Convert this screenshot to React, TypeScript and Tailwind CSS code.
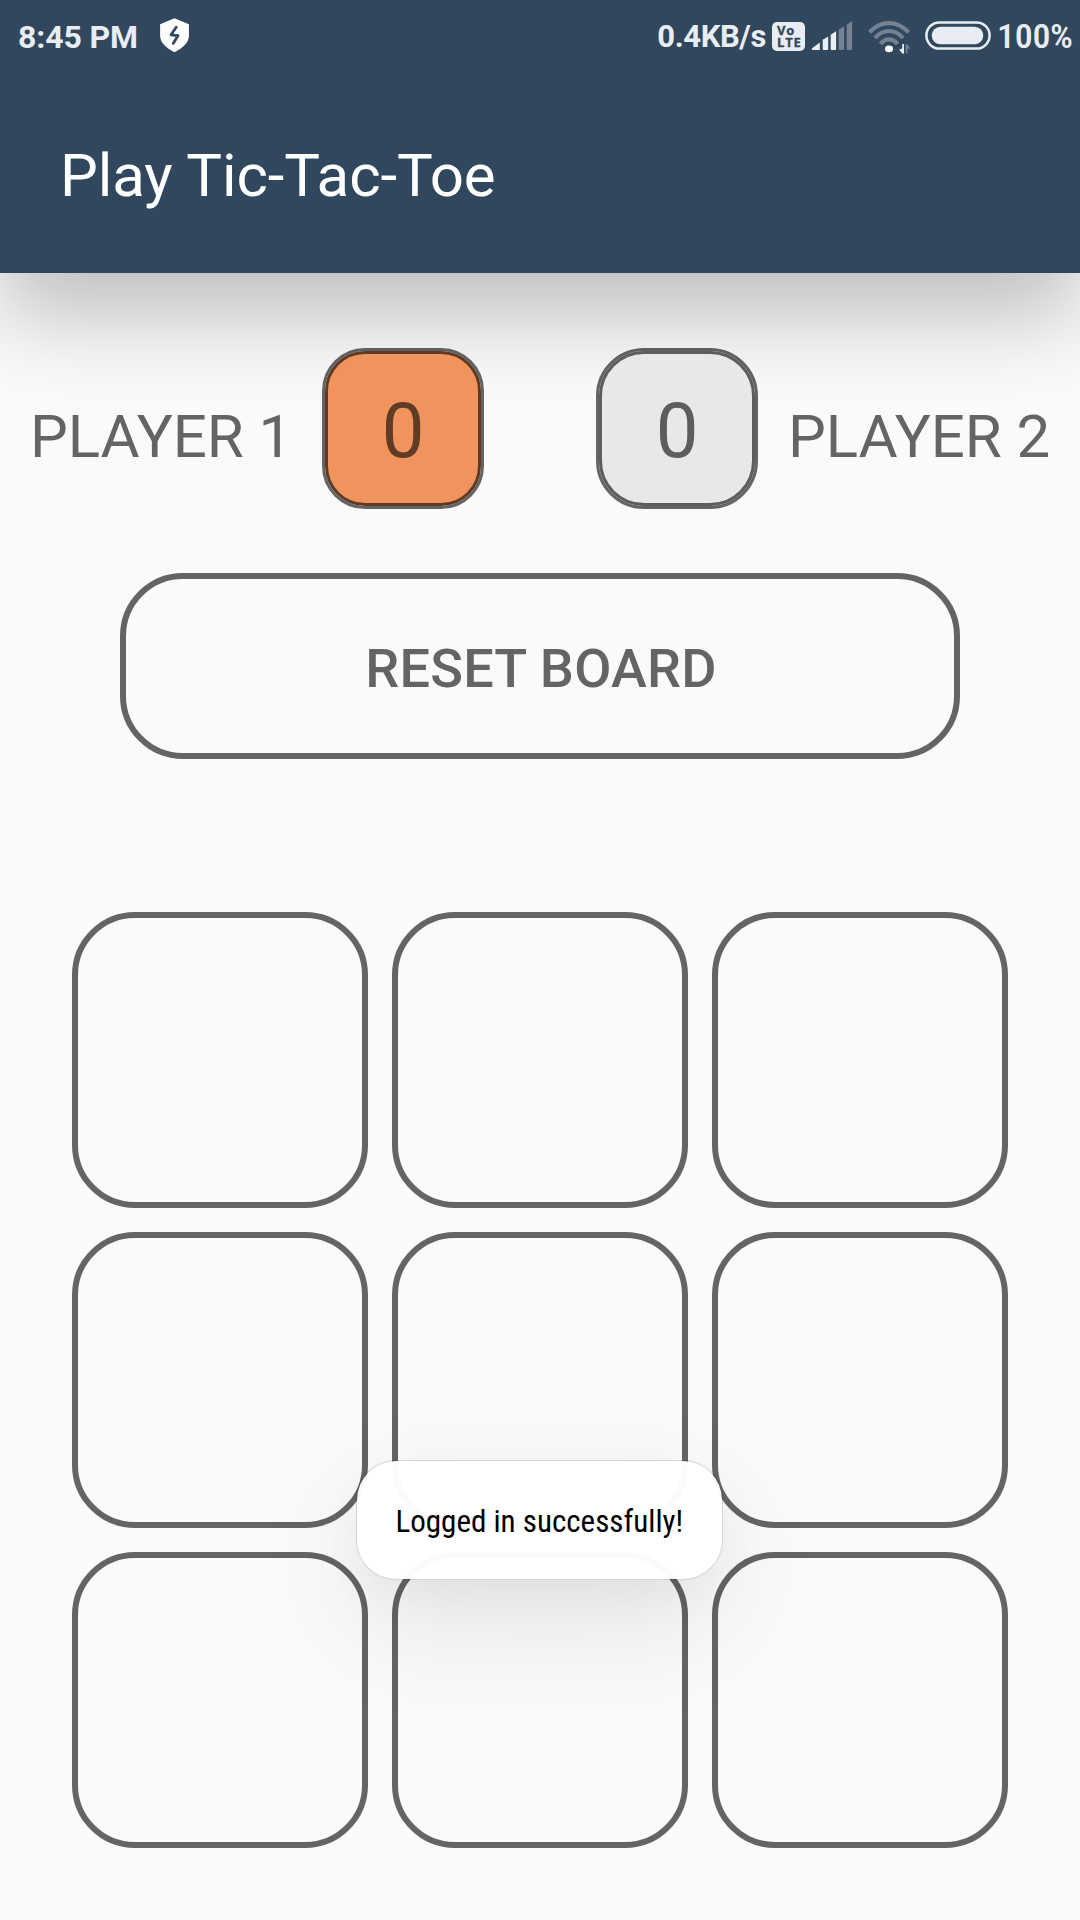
const BATTERY_LEVEL = "100%";

function ShieldIcon() {
  return (
    <svg className="mb-[2px] ml-[22px] h-[36px] w-[31px]" viewBox="0 0 31 36" fill="none">
      <path d="M15.5 1.3 29.9 7.2V18.6C29.9 25.6 24.2 31 15.5 35.3 6.8 31 1.1 25.6 1.1 18.6V7.2Z" fill="#fff" />
      <path d="M17.2 10.2 12 17.8 19 18.6 14.2 26.4" stroke="#31475d" strokeWidth="2.8" strokeLinecap="round" strokeLinejoin="round" />
    </svg>
  );
}

function VolteBadge() {
  return (
    <svg className="ml-[6px] h-[29px] w-[33px]" viewBox="0 0 33 29">
      <rect width="33" height="29" rx="5" fill="#e9edf1" />
      <text fill="#31475d" stroke="#31475d" strokeWidth="0.3" fontFamily="Open Sans, sans-serif" fontWeight="700" fontSize="13" letterSpacing="0.8">
        <tspan x="5" y="12.6">Vo</tspan>
        <tspan x="5" y="25.4">LTE</tspan>
      </text>
    </svg>
  );
}

function SignalIcon() {
  return (
    <svg className="ml-[6px] h-[30px] w-[42px]" viewBox="0 0 42 30">
      <g fill="#eceff2">
        <path d="M.8 27.4 8.8 21.5V29H1.6Q.4 29 .8 27.4Z" />
        <path d="M11.7 18.8 17.2 15.4V28Q17.2 29 16.2 29H12.7Q11.7 29 11.7 28Z" />
        <path d="M19.7 13.7 25.1 10.3V28Q25.1 29 24.1 29H20.7Q19.7 29 19.7 28Z" />
      </g>
      <g fill="#748293">
        <path d="M27.7 8.8 33.1 5.2V28Q33.1 29 32.1 29H28.7Q27.7 29 27.7 28Z" />
        <path d="M35.7 3.8 41.1 0V28Q41.1 29 40.1 29H36.7Q35.7 29 35.7 28Z" />
      </g>
    </svg>
  );
}

function WifiIcon() {
  return (
    <svg className="ml-[14px] mt-[2px] h-[34px] w-[44px]" viewBox="0 0 44 34" fill="none">
      <g stroke="#748293" strokeWidth="4.2">
        <path d="M2.5 12.2Q11 3.1 22 3.1T41.5 12.2" />
        <path d="M8 18Q14 11 22 11T36 18" />
        <path d="M13.5 24Q17 19.3 22 19.3T30.5 24" />
      </g>
      <ellipse cx="22" cy="28.9" rx="4" ry="3.3" fill="#fff" />
      <path d="M37 24V33.5H35.2L32.2 29.4 35.2 28.6V24Z" fill="#eceff2" />
      <path d="M38.7 24H40L43.2 28.600 40.400 28.800V33.500H38.700Z" fill="#748293" />
    </svg>
  );
}

function BatteryIcon() {
  return (
    <svg className="mb-[2px] ml-[14px] h-[29px] w-[66px]" viewBox="0 0 66 29" fill="none">
      <rect x="1.4" y="1.4" width="63.2" height="26.2" rx="13.1" stroke="#e9edf1" strokeWidth="2.5" />
      <rect x="6.7" y="5.7" width="51.6" height="17.6" rx="8.8" fill="#e9ecf2" />
    </svg>
  );
}

function StatusBar() {
  return (
    <div className="flex h-[72px] items-center justify-between pl-[18px] pr-[9px] text-[#e9edf1]">
      <div className="flex items-center">
        <span className="w-[119px] whitespace-nowrap pt-[1px] text-[32px] font-bold leading-none tracking-[-0.1px]">8:45 PM</span>
        <ShieldIcon />
      </div>
      <div className="flex items-center">
        <span className="pt-[1px] text-[31px] font-bold leading-none tracking-[-0.4px]">0.4KB/s</span>
        <VolteBadge />
        <SignalIcon />
        <WifiIcon />
        <BatteryIcon />
        <span className="ml-[6px] w-[74px] origin-left scale-x-[1.06] text-[34px] font-medium leading-none tracking-[-0.3px] [font-stretch:75%]">{BATTERY_LEVEL}</span>
      </div>
    </div>
  );
}

function Score({ value, active }: { value: number; active?: boolean }) {
  return (
    <div className={`h-[161px] w-[162px] shrink-0 border-[3px] border-black/60 ${active ? "rounded-[43px]" : "rounded-[48px]"}`}>
      <div
        className={`flex h-full items-center justify-center border-[3px] text-[76px] leading-none ${
          active
            ? "rounded-[40px] border-[#5e3a25] bg-[#f1935c] text-[#603b25]"
            : "rounded-[45px] border-[#5d5d5d] bg-[#e8e8e8] text-[#5d5d5d]"
        }`}
      >
        <span className="pt-[5px]">{value}</span>
      </div>
    </div>
  );
}

function Toast() {
  return (
    <div className="absolute left-[356px] top-[1460px] flex h-[120px] w-[367px] items-center justify-center rounded-[40px] border border-black/15 bg-white/97 bg-clip-padding shadow-[0_44px_120px_rgba(0,0,0,0.09),0_20px_50px_-10px_rgba(0,0,0,0.05)]">
      <span className="origin-center scale-x-[0.97] whitespace-nowrap pt-[2px] text-[32px] leading-none text-black [font-stretch:75%]">Logged in successfully!</span>
    </div>
  );
}

export default function App() {
  return (
    <main className="relative flex h-[1920px] w-[1080px] flex-col overflow-hidden bg-[#fafafa] font-[Roboto,sans-serif]">
      <header className="h-[273px] shrink-0 bg-[#31475d] shadow-[0_42px_82px_rgba(0,0,0,0.24)]">
        <StatusBar />
        <h1 className="pl-[60px] pt-[69px] text-[60px] leading-[70px] tracking-[-0.1px] text-white">Play Tic-Tac-Toe</h1>
      </header>

      <section className="mt-[75px] flex items-start pl-[30px] text-[60px] leading-[70px] text-[#646464]">
        <span className="mt-[54px] w-[292px] whitespace-nowrap tracking-[-0.1px]">PLAYER 1</span>
        <Score value={0} active />
        <div className="w-[112px]" />
        <Score value={0} />
        <span className="ml-[30px] mt-[54px] whitespace-nowrap tracking-[-0.1px]">PLAYER 2</span>
      </section>

      <button className="mx-[120px] mt-[64px] h-[186px] shrink-0 rounded-[63px] border-[6px] border-[#646464] pl-[2px] pt-[4px] text-[54px] font-medium tracking-[0.2px] text-[#646464]">
        RESET BOARD
      </button>

      <section className="mx-[72px] mt-[153px] grid grid-cols-3 gap-[24px]">
        {Array.from({ length: 9 }, (_, i) => (
          <button key={i} className="h-[296px] rounded-[63px] border-[6px] border-[#646464]" />
        ))}
      </section>

      <Toast />
    </main>
  );
}
